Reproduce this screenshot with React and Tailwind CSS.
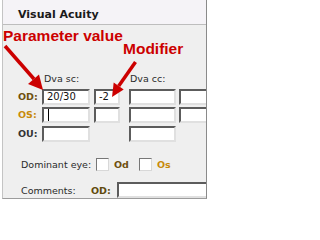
import React from "react";

const boxCls =
  "h-4 shrink-0 bg-white border-2 border-t-[#5c5c5c] border-l-[#5c5c5c] border-b-[#e0e0e0] border-r-[#e0e0e0] pl-[3px] text-[10px] leading-[12px] text-[#111] overflow-hidden whitespace-nowrap";

function Box({ w, children }) {
  return <div className={`${boxCls} ${w}`}>{children}</div>;
}

function Check() {
  return (
    <div className="w-[13px] h-[13px] shrink-0 bg-white border border-t-[#777] border-l-[#777] border-b-[#d8d8d8] border-r-[#d8d8d8]" />
  );
}

export default function App() {
  return (
    <div className="relative w-[208px] h-[200px] bg-white overflow-hidden font-['DejaVu_Sans',sans-serif] text-[#2a2a2a]">
      <div className="h-full flex pl-[2px] pr-[1px] pb-[1px]">
        <div className="flex-1 flex flex-col overflow-hidden border-l border-r border-b border-l-[#c4c4c4] border-r-[#8a8a8a] border-b-[#9c9c9c]">
          <div className="h-[25px] shrink-0 bg-[#f5f3f7] border-b border-b-[#bdbdbd] pl-[15px] pt-[8px]">
            <div className="text-[11px] leading-[13px] font-bold text-[#1a1a1a]">Visual Acuity</div>
          </div>
          <div className="flex-1 bg-[#efefef] pt-[47px] pl-[15px] overflow-hidden text-[9.5px]">
            <div className="flex h-[13px] leading-[13px]">
              <div className="w-[24px] shrink-0" />
              <div className="w-[87px] shrink-0 pl-[2px]">Dva sc:</div>
              <div className="pl-[1px]">Dva cc:</div>
            </div>
            <div className="flex items-center mt-[4px]">
              <div className="w-[24px] shrink-0 font-bold text-[#6e500e] leading-[12px]">OD:</div>
              <Box w="w-[48px]">20/30</Box>
              <div className="ml-[4px]"><Box w="w-[26px]">-2</Box></div>
              <div className="ml-[9px]"><Box w="w-[47px]" /></div>
              <div className="ml-[3px]"><Box w="w-[30px]" /></div>
            </div>
            <div className="flex items-center mt-[2px]">
              <div className="w-[24px] shrink-0 font-bold text-[#c88a0c] leading-[12px]">OS:</div>
              <Box w="w-[48px]">
                <span className="inline-block align-top w-px h-[12px] bg-black ml-[1px]" />
              </Box>
              <div className="ml-[4px]"><Box w="w-[26px]" /></div>
              <div className="ml-[9px]"><Box w="w-[47px]" /></div>
              <div className="ml-[3px]"><Box w="w-[30px]" /></div>
            </div>
            <div className="flex items-center mt-[3px]">
              <div className="w-[24px] shrink-0 font-bold text-[#333] leading-[12px]">OU:</div>
              <Box w="w-[48px]" />
              <div className="ml-[4px] w-[26px] shrink-0" />
              <div className="ml-[9px]"><Box w="w-[47px]" /></div>
            </div>
            <div className="flex items-center h-[13px] mt-[16px] pl-[3px] leading-[13px]">
              <span className="w-[75px] shrink-0 whitespace-nowrap">Dominant eye:</span>
              <Check />
              <span className="ml-[5px] font-bold text-[#6e500e]">Od</span>
              <span className="ml-[10px]"><Check /></span>
              <span className="ml-[5px] font-bold text-[#c88a0c]">Os</span>
            </div>
            <div className="flex items-center h-4 mt-[11px] pl-[3px] leading-[13px]">
              <span className="w-[70px] shrink-0 whitespace-nowrap">Comments:</span>
              <span className="w-[26px] shrink-0 font-bold text-[#5e4a0c]">OD:</span>
              <Box w="w-[100px]" />
            </div>
          </div>
        </div>
      </div>

      <div className="absolute left-[3px] top-[28px] text-[15.5px] leading-none font-bold text-[#cc0000] font-['Liberation_Sans',Arial,sans-serif] whitespace-nowrap">
        Parameter value
      </div>
      <div className="absolute left-[123px] top-[41px] text-[15.5px] leading-none font-bold text-[#cc0000] font-['Liberation_Sans',Arial,sans-serif] whitespace-nowrap">
        Modifier
      </div>
      <svg className="absolute inset-0 pointer-events-none" width="208" height="200" viewBox="0 0 208 200">
        <line x1="5" y1="46" x2="34" y2="79" stroke="#cc0000" strokeWidth="3.5" />
        <polygon points="43,90 39,74.5 28,84" fill="#cc0000" />
        <line x1="135.5" y1="62" x2="118.7" y2="86" stroke="#cc0000" strokeWidth="3.5" />
        <polygon points="112,97 123.7,89.4 113.7,82.6" fill="#cc0000" />
      </svg>
    </div>
  );
}
